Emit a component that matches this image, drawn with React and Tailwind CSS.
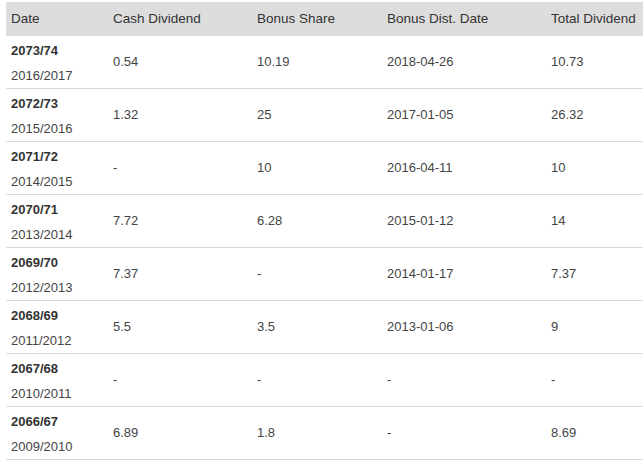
const rows = [
  ["2073/74", "2016/2017", "0.54", "10.19", "2018-04-26", "10.73"],
  ["2072/73", "2015/2016", "1.32", "25", "2017-01-05", "26.32"],
  ["2071/72", "2014/2015", "-", "10", "2016-04-11", "10"],
  ["2070/71", "2013/2014", "7.72", "6.28", "2015-01-12", "14"],
  ["2069/70", "2012/2013", "7.37", "-", "2014-01-17", "7.37"],
  ["2068/69", "2011/2012", "5.5", "3.5", "2013-01-06", "9"],
  ["2067/68", "2010/2011", "-", "-", "-", "-"],
  ["2066/67", "2009/2010", "6.89", "1.8", "-", "8.69"],
];

const cols = "grid grid-cols-[102px_144px_130px_164px_120px]";

const App = () => {
  return (
    <div className="w-[643px] h-[460px] bg-white overflow-hidden pt-[2px] pl-[6px] font-['Liberation_Sans',Arial,sans-serif] text-[13px] text-[#444]">
      {/* Header */}
      <div className={`${cols} h-[34px] items-center bg-[#dddddd] text-[13.5px] text-[#333]`}>
        <div className="pl-[5px]">Date</div>
        <div className="pl-[5px]">Cash Dividend</div>
        <div className="pl-[5px]">Bonus Share</div>
        <div className="pl-[5px]">Bonus Dist. Date</div>
        <div className="pl-[5px] whitespace-nowrap">Total Dividend</div>
      </div>

      {/* Rows */}
      {rows.map((r) => (
        <div
          key={r[0]}
          className={`${cols} h-[53px] items-center border-b border-[#d9d9d9]`}
        >
          <div className="pl-[5px] leading-[25px] pt-[1px]">
            <div className="font-bold text-[#333]">{r[0]}</div>
            <div>{r[1]}</div>
          </div>
          <div className="pl-[5px]">{r[2]}</div>
          <div className="pl-[5px]">{r[3]}</div>
          <div className="pl-[5px]">{r[4]}</div>
          <div className="pl-[5px]">{r[5]}</div>
        </div>
      ))}
    </div>
  );
};

export default App;
